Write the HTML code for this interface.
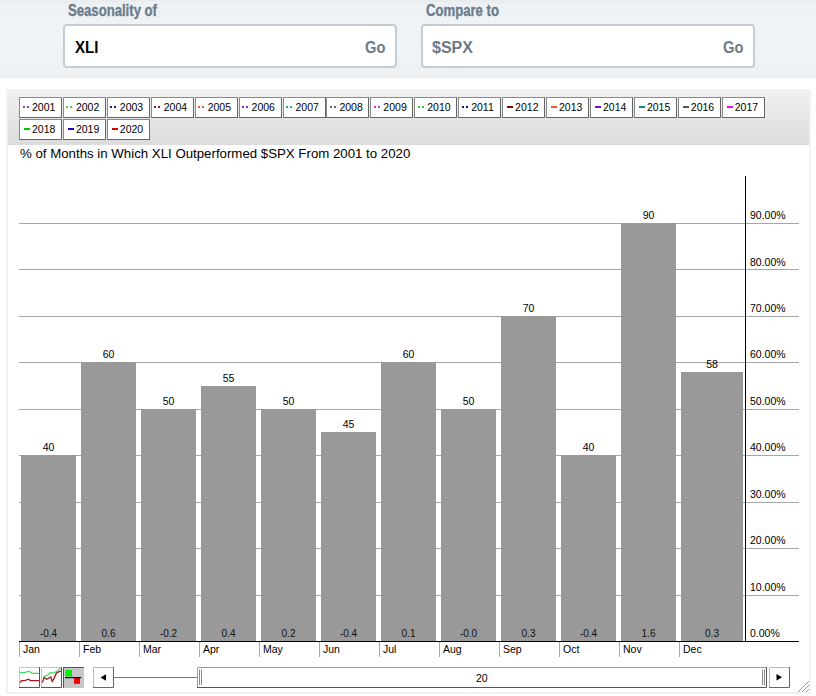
<!DOCTYPE html>
<html><head><meta charset="utf-8">
<style>
*{margin:0;padding:0;box-sizing:border-box}
html,body{width:816px;height:696px;overflow:hidden;background:#fff;font-family:"Liberation Sans",sans-serif;position:relative}
.a{position:absolute}
#top{left:0;top:0;width:816px;height:78px;background:linear-gradient(#e8ecef 0,#eff2f5 5px,#f0f3f6 40px,#eff2f5 72px,#ebeff2 78px)}
.lbl{font-weight:bold;font-size:16px;color:#6b7d8c;-webkit-text-stroke:0.35px #6b7d8c;transform:scaleX(0.82);transform-origin:0 0;white-space:nowrap;line-height:16px;margin-top:0.5px}
.inp{top:24px;width:334px;height:44px;border:2px solid #c5cdd4;border-radius:4px;background:#fff}
.inp span{position:absolute;font-weight:bold;font-size:16px;line-height:16px;white-space:nowrap}
#frame{left:6px;top:89px;width:805px;height:605px;background:#fff;border:2px solid #f2f2f2;border-top:0}
#hdr{left:8px;top:89px;width:801px;height:56px;background:linear-gradient(#f1f1f1,#dcdcdc)}
.btn{top:97px;height:20.6px;width:43px;border:1px solid #8a8a8a;border-right-color:#666;border-bottom-color:#666;background:#fff;font-size:10.5px;line-height:12px;color:#000;white-space:nowrap}
.btn i{position:absolute;left:2.5px;top:8px;width:6px;height:2px}
.btn b{position:absolute;left:12px;top:3px;font-weight:normal}
.dot{background-image:linear-gradient(90deg,currentColor 0,currentColor 2px,transparent 2px,transparent 4px);background-size:4px 2px;width:6px!important}
.sol{background:currentColor;left:3.8px!important}
#title{left:20px;top:145.7px;font-size:13.25px;line-height:16px;white-space:nowrap}
.gl{left:19px;width:780px;height:1px;background:#a6a6a6}
.bar{background:#999}
.yl{left:750px;font-size:10.5px;line-height:12px;white-space:nowrap}
.vl{font-size:10.5px;line-height:12px;text-align:center;white-space:nowrap}
.bl{font-size:10px;line-height:12px;text-align:center;white-space:nowrap;color:#111}
.ml{font-size:10.5px;line-height:12px;white-space:nowrap}
.tk{top:641px;width:1px;height:16px;background:#aaa}
</style></head><body>
<div id="top" class="a"></div>
<div class="a lbl" style="left:68px;top:2px">Seasonality of</div>
<div class="a lbl" style="left:426px;top:2px">Compare to</div>
<div class="a inp" style="left:63px"><span style="left:10px;top:14px;color:#000;transform:scaleX(0.94);transform-origin:0 0">XLI</span><span style="left:299.5px;top:14px;color:#6b7a86;transform:scaleX(0.92);transform-origin:0 0">Go</span></div>
<div class="a inp" style="left:421px"><span style="left:9px;top:14px;color:#6b7a86">$SPX</span><span style="left:299.5px;top:14px;color:#6b7a86;transform:scaleX(0.92);transform-origin:0 0">Go</span></div>

<div id="frame" class="a"></div>
<div id="hdr" class="a"></div>
<div class="a btn" style="left:19.00px;top:97px"><i class="dot" style="color:#a838a8"></i><b>2001</b></div>
<div class="a btn" style="left:62.92px;top:97px"><i class="dot" style="color:#58d058"></i><b>2002</b></div>
<div class="a btn" style="left:106.84px;top:97px"><i class="dot" style="color:#20207a"></i><b>2003</b></div>
<div class="a btn" style="left:150.76px;top:97px"><i class="dot" style="color:#8a1f1f"></i><b>2004</b></div>
<div class="a btn" style="left:194.68px;top:97px"><i class="dot" style="color:#e0642a"></i><b>2005</b></div>
<div class="a btn" style="left:238.60px;top:97px"><i class="dot" style="color:#8a2ac8"></i><b>2006</b></div>
<div class="a btn" style="left:282.52px;top:97px"><i class="dot" style="color:#20a8a8"></i><b>2007</b></div>
<div class="a btn" style="left:326.44px;top:97px"><i class="dot" style="color:#666"></i><b>2008</b></div>
<div class="a btn" style="left:370.36px;top:97px"><i class="dot" style="color:#e02ae0"></i><b>2009</b></div>
<div class="a btn" style="left:414.28px;top:97px"><i class="dot" style="color:#28d028"></i><b>2010</b></div>
<div class="a btn" style="left:458.20px;top:97px"><i class="dot" style="color:#141470"></i><b>2011</b></div>
<div class="a btn" style="left:502.12px;top:97px"><i class="sol" style="color:#8b0000"></i><b>2012</b></div>
<div class="a btn" style="left:546.04px;top:97px"><i class="sol" style="color:#ff5522"></i><b>2013</b></div>
<div class="a btn" style="left:589.96px;top:97px"><i class="sol" style="color:#8000ff"></i><b>2014</b></div>
<div class="a btn" style="left:633.88px;top:97px"><i class="sol" style="color:#108878"></i><b>2015</b></div>
<div class="a btn" style="left:677.80px;top:97px"><i class="sol" style="color:#555"></i><b>2016</b></div>
<div class="a btn" style="left:721.72px;top:97px"><i class="sol" style="color:#ff00ff"></i><b>2017</b></div>
<div class="a btn" style="left:19.00px;top:119px"><i class="sol" style="color:#00cc00"></i><b>2018</b></div>
<div class="a btn" style="left:62.92px;top:119px"><i class="sol" style="color:#2200c8"></i><b>2019</b></div>
<div class="a btn" style="left:106.84px;top:119px"><i class="sol" style="color:#dd0000"></i><b>2020</b></div>

<div id="title" class="a">% of Months in Which XLI Outperformed $SPX From 2001 to 2020</div>
<div class="a gl" style="top:594.56px"></div>
<div class="a gl" style="top:548.12px"></div>
<div class="a gl" style="top:501.68px"></div>
<div class="a gl" style="top:455.24px"></div>
<div class="a gl" style="top:408.80px"></div>
<div class="a gl" style="top:362.36px"></div>
<div class="a gl" style="top:315.92px"></div>
<div class="a gl" style="top:269.48px"></div>
<div class="a gl" style="top:223.04px"></div>
<div class="a bar" style="left:21px;top:455.2px;width:55px;height:185.8px"></div>
<div class="a vl" style="left:11px;width:75px;top:441.2px">40</div>
<div class="a bl" style="left:11px;width:75px;top:628.3px">-0.4</div>
<div class="a tk" style="left:19px"></div>
<div class="a ml" style="left:23px;top:643px">Jan</div>
<div class="a bar" style="left:81px;top:362.4px;width:55px;height:278.6px"></div>
<div class="a vl" style="left:71px;width:75px;top:348.4px">60</div>
<div class="a bl" style="left:71px;width:75px;top:628.3px">0.6</div>
<div class="a tk" style="left:79px"></div>
<div class="a ml" style="left:83px;top:643px">Feb</div>
<div class="a bar" style="left:141px;top:408.8px;width:55px;height:232.2px"></div>
<div class="a vl" style="left:131px;width:75px;top:394.8px">50</div>
<div class="a bl" style="left:131px;width:75px;top:628.3px">-0.2</div>
<div class="a tk" style="left:139px"></div>
<div class="a ml" style="left:143px;top:643px">Mar</div>
<div class="a bar" style="left:201px;top:385.6px;width:55px;height:255.4px"></div>
<div class="a vl" style="left:191px;width:75px;top:371.6px">55</div>
<div class="a bl" style="left:191px;width:75px;top:628.3px">0.4</div>
<div class="a tk" style="left:199px"></div>
<div class="a ml" style="left:203px;top:643px">Apr</div>
<div class="a bar" style="left:261px;top:408.8px;width:55px;height:232.2px"></div>
<div class="a vl" style="left:251px;width:75px;top:394.8px">50</div>
<div class="a bl" style="left:251px;width:75px;top:628.3px">0.2</div>
<div class="a tk" style="left:259px"></div>
<div class="a ml" style="left:263px;top:643px">May</div>
<div class="a bar" style="left:321px;top:432.0px;width:55px;height:209.0px"></div>
<div class="a vl" style="left:311px;width:75px;top:418.0px">45</div>
<div class="a bl" style="left:311px;width:75px;top:628.3px">-0.4</div>
<div class="a tk" style="left:319px"></div>
<div class="a ml" style="left:323px;top:643px">Jun</div>
<div class="a bar" style="left:381px;top:362.4px;width:55px;height:278.6px"></div>
<div class="a vl" style="left:371px;width:75px;top:348.4px">60</div>
<div class="a bl" style="left:371px;width:75px;top:628.3px">0.1</div>
<div class="a tk" style="left:379px"></div>
<div class="a ml" style="left:383px;top:643px">Jul</div>
<div class="a bar" style="left:441px;top:408.8px;width:55px;height:232.2px"></div>
<div class="a vl" style="left:431px;width:75px;top:394.8px">50</div>
<div class="a bl" style="left:431px;width:75px;top:628.3px">-0.0</div>
<div class="a tk" style="left:439px"></div>
<div class="a ml" style="left:443px;top:643px">Aug</div>
<div class="a bar" style="left:501px;top:315.9px;width:55px;height:325.1px"></div>
<div class="a vl" style="left:491px;width:75px;top:301.9px">70</div>
<div class="a bl" style="left:491px;width:75px;top:628.3px">0.3</div>
<div class="a tk" style="left:499px"></div>
<div class="a ml" style="left:503px;top:643px">Sep</div>
<div class="a bar" style="left:561px;top:455.2px;width:55px;height:185.8px"></div>
<div class="a vl" style="left:551px;width:75px;top:441.2px">40</div>
<div class="a bl" style="left:551px;width:75px;top:628.3px">-0.4</div>
<div class="a tk" style="left:559px"></div>
<div class="a ml" style="left:563px;top:643px">Oct</div>
<div class="a bar" style="left:621px;top:223.0px;width:55px;height:418.0px"></div>
<div class="a vl" style="left:611px;width:75px;top:209.0px">90</div>
<div class="a bl" style="left:611px;width:75px;top:628.3px">1.6</div>
<div class="a tk" style="left:619px"></div>
<div class="a ml" style="left:623px;top:643px">Nov</div>
<div class="a bar" style="left:681px;top:371.6px;width:62px;height:269.4px"></div>
<div class="a vl" style="left:671px;width:82px;top:357.6px">58</div>
<div class="a bl" style="left:671px;width:82px;top:628.3px">0.3</div>
<div class="a tk" style="left:679px"></div>
<div class="a ml" style="left:683px;top:643px">Dec</div>
<div class="a yl" style="top:627.0px">0.00%</div>
<div class="a yl" style="top:580.6px">10.00%</div>
<div class="a yl" style="top:534.1px">20.00%</div>
<div class="a yl" style="top:487.7px">30.00%</div>
<div class="a yl" style="top:441.2px">40.00%</div>
<div class="a yl" style="top:394.8px">50.00%</div>
<div class="a yl" style="top:348.4px">60.00%</div>
<div class="a yl" style="top:301.9px">70.00%</div>
<div class="a yl" style="top:255.5px">80.00%</div>
<div class="a yl" style="top:209.0px">90.00%</div>
<div class="a" style="left:19px;top:640.6px;width:780px;height:1.2px;background:#000"></div>
<div class="a" style="left:744.8px;top:176px;width:1.2px;height:465px;background:#000"></div>
<svg class="a" style="left:19px;top:667px" width="21" height="21" viewBox="0 0 21 21">
<rect x="0" y="0" width="21" height="21" fill="#fff"/>
<path d="M0.5,21 V0.5 H20.5" fill="none" stroke="#c4c4c4"/>
<path d="M0,20.5 H20.5 V0" fill="none" stroke="#555"/>
<polyline points="1,5.5 5.3,5.7 8.1,4.6 10.4,4.3 13.2,6.3 20,6.3" fill="none" stroke="#3ddc5a" stroke-width="1.2"/>
<polyline points="1.1,15.6 2.5,13.6 6.5,13.3 9.3,12.2 11.5,13.6 20,13.6" fill="none" stroke="#a8141c" stroke-width="1.2"/>
</svg>
<svg class="a" style="left:41px;top:667px" width="21" height="21" viewBox="0 0 21 21">
<rect x="0" y="0" width="21" height="21" fill="#fff"/>
<path d="M0.5,21 V0.5 H20.5" fill="none" stroke="#c4c4c4"/>
<path d="M0,20.5 H20.5 V0" fill="none" stroke="#555"/>
<polyline points="2.5,10.2 4.2,9.1 6.4,8 9.8,5.7 12.6,6 14.9,4.9 18.3,2.1 20,0.4" fill="none" stroke="#3ddc5a" stroke-width="1.2"/>
<polyline points="1.4,15.6 3.1,10.5 5.9,12.2 9.8,10 11.2,14.5 13.2,11.1 15.5,6 17.7,4.9 20,4" fill="none" stroke="#a8141c" stroke-width="1.3"/>
</svg>
<svg class="a" style="left:63px;top:667px" width="21" height="21" viewBox="0 0 21 21">
<rect x="0" y="0" width="21" height="21" fill="#c6c6c6"/>
<path d="M0.5,21 V0.5 H21" fill="none" stroke="#555"/>
<rect x="2.5" y="3" width="6.5" height="6.5" fill="#00ee00"/>
<rect x="11" y="11" width="6" height="5.8" fill="#ee0000"/>
<rect x="2" y="10" width="16.2" height="1.2" fill="#000"/>
</svg>
<svg class="a" style="left:93px;top:667px" width="21" height="21" viewBox="0 0 21 21">
<rect x="0" y="0" width="21" height="21" fill="#fff"/>
<path d="M0.5,21 V0.5 H20.5" fill="none" stroke="#bbb"/>
<path d="M0,20.5 H20.5 V0" fill="none" stroke="#666"/>
<polygon points="7.5,10.5 13,7.2 13,13.8" fill="#000"/>
</svg>
<div class="a" style="left:114px;top:677px;width:84px;height:1px;background:#777"></div>
<svg class="a" style="left:197px;top:667px" width="570" height="21" viewBox="0 0 570 21">
<rect x="0" y="0" width="570" height="21" fill="#fff"/><path d="M0.5,21 V0.5 H570" fill="none" stroke="#9a9a9a"/><path d="M0,20.5 H569.5 V0" fill="none" stroke="#555"/>
<line x1="2.5" y1="2.5" x2="2.5" y2="18" stroke="#888"/><line x1="4.5" y1="2.5" x2="4.5" y2="18" stroke="#888"/>
<line x1="565.5" y1="2.5" x2="565.5" y2="18" stroke="#888"/><line x1="567.5" y1="2.5" x2="567.5" y2="18" stroke="#888"/>
</svg>
<div class="a" style="left:476px;top:671.5px;font-size:10.5px;line-height:12px">20</div>
<svg class="a" style="left:769px;top:667px" width="21" height="21" viewBox="0 0 21 21">
<rect x="0" y="0" width="21" height="21" fill="#fff"/>
<path d="M0.5,21 V0.5 H20.5" fill="none" stroke="#bbb"/>
<path d="M0,20.5 H20.5 V0" fill="none" stroke="#666"/>
<polygon points="13,10.3 7.5,7 7.5,13.5" fill="#000"/>
</svg>
<svg class="a" style="left:796px;top:679px" width="14" height="14" viewBox="0 0 14 14">
<line x1="2" y1="13" x2="13" y2="2" stroke="#999" stroke-width="1"/>
<line x1="6" y1="13" x2="13" y2="6" stroke="#999" stroke-width="1"/>
<line x1="10" y1="13" x2="13" y2="10" stroke="#999" stroke-width="1"/>
</svg>
</body></html>
